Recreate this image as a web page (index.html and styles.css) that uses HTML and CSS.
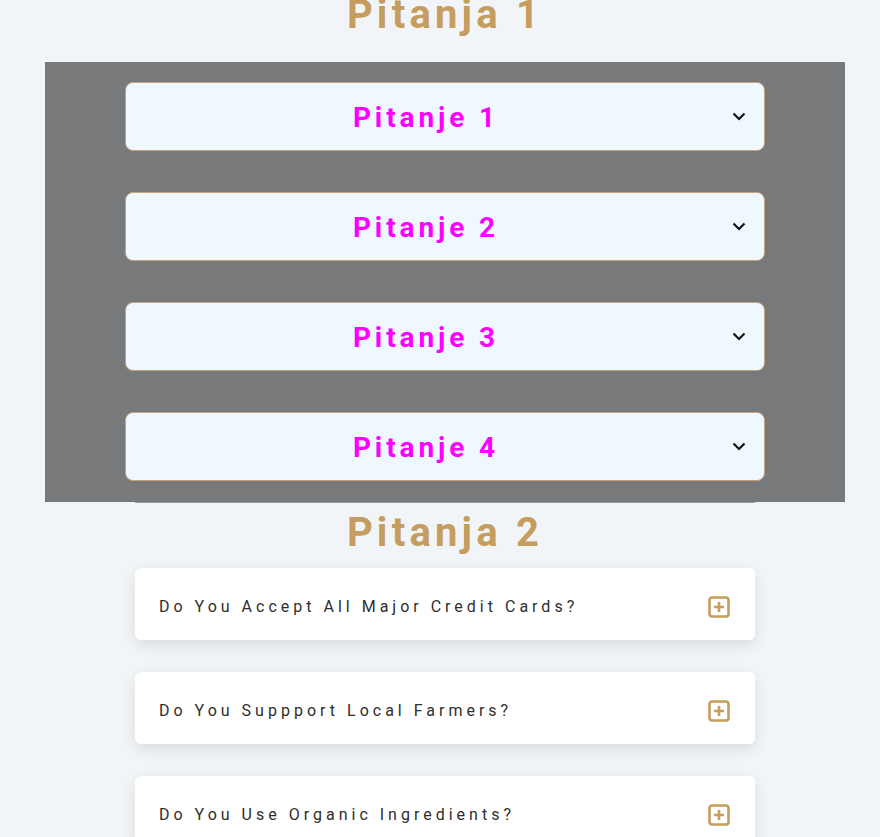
FILE: index.html
```html
<!DOCTYPE html>
<html lang="hr">
<head>
<meta charset="utf-8">
<title>Pitanja</title>
<link rel="stylesheet" href="styles.css">
</head>
<body>
<h1 class="title title-top">Pitanja 1</h1>
<section class="panel">
  <div class="select"><span class="select-label">Pitanje 1</span><svg class="chev" viewBox="0 0 14 9" width="14" height="9"><path d="M1.5 1.5 L7 7 L12.5 1.5" fill="none" stroke="#111" stroke-width="2.2"/></svg></div>
  <div class="select"><span class="select-label">Pitanje 2</span><svg class="chev" viewBox="0 0 14 9" width="14" height="9"><path d="M1.5 1.5 L7 7 L12.5 1.5" fill="none" stroke="#111" stroke-width="2.2"/></svg></div>
  <div class="select"><span class="select-label">Pitanje 3</span><svg class="chev" viewBox="0 0 14 9" width="14" height="9"><path d="M1.5 1.5 L7 7 L12.5 1.5" fill="none" stroke="#111" stroke-width="2.2"/></svg></div>
  <div class="select"><span class="select-label">Pitanje 4</span><svg class="chev" viewBox="0 0 14 9" width="14" height="9"><path d="M1.5 1.5 L7 7 L12.5 1.5" fill="none" stroke="#111" stroke-width="2.2"/></svg></div>
</section>
<section class="faq">
  <h2 class="title">Pitanja 2</h2>
  <article class="question"><h4 class="q-text">Do You Accept All Major Credit Cards?</h4><svg class="plus" viewBox="0 0 22 22" width="22" height="22"><rect x="1.5" y="1.5" width="19" height="19" rx="2.5" fill="none" stroke="#c59d5f" stroke-width="2.6"/><path d="M11 6v10M6 11h10" stroke="#c59d5f" stroke-width="2.6"/></svg></article>
  <article class="question"><h4 class="q-text">Do You Suppport Local Farmers?</h4><svg class="plus" viewBox="0 0 22 22" width="22" height="22"><rect x="1.5" y="1.5" width="19" height="19" rx="2.5" fill="none" stroke="#c59d5f" stroke-width="2.6"/><path d="M11 6v10M6 11h10" stroke="#c59d5f" stroke-width="2.6"/></svg></article>
  <article class="question"><h4 class="q-text">Do You Use Organic Ingredients?</h4><svg class="plus" viewBox="0 0 22 22" width="22" height="22"><rect x="1.5" y="1.5" width="19" height="19" rx="2.5" fill="none" stroke="#c59d5f" stroke-width="2.6"/><path d="M11 6v10M6 11h10" stroke="#c59d5f" stroke-width="2.6"/></svg></article>
</section>
</body>
</html>
```
FILE: styles.css
```css
* { box-sizing: border-box; }
html, body { margin: 0; padding: 0; }
body {
  background: #f1f5f8;
  font-family: Roboto, "Liberation Sans", sans-serif;
  color: #102a42;
  overflow: hidden;
  padding-left: 10px;
}
.title {
  margin: 0;
  text-align: center;
  color: #c59d5f;
  font-size: 40px;
  font-weight: 700;
  letter-spacing: 4.2px;
  line-height: 48px;
}
.title-top {
  margin-top: -9px;
  margin-bottom: 23px;
}
.panel {
  width: 800px;
  margin: 0 auto;
  background: #78797b;
  padding: 20px 80px 21px;
  display: flex;
  flex-direction: column;
  gap: 41px;
}
.select {
  height: 69px;
  background: #eff7ff;
  border: 1px solid #c5a27a;
  border-radius: 8px;
  display: flex;
  align-items: center;
  justify-content: center;
  padding-right: 38px;
  padding-top: 2px;
  position: relative;
}
.select-label {
  color: #ff00ff;
  font-size: 28px;
  font-weight: 700;
  letter-spacing: 3.9px;
}
.chev {
  position: absolute;
  right: 18px;
  top: 29px;
}
.faq {
  width: 620px;
  margin: 0 auto;
  border-top: 1px solid #9a9c9f;
  padding-top: 6px;
}
.faq .title { margin-bottom: 11px; }
.question {
  background: #fff;
  border-radius: 6px;
  box-shadow: 0 5px 15px rgba(0,0,0,0.1);
  height: 72px;
  margin-bottom: 32px;
  padding: 5px 25px 0 24px;
  display: flex;
  align-items: center;
  justify-content: space-between;
}
.q-text {
  margin: 0;
  font-size: 16px;
  font-weight: 400;
  letter-spacing: 4px;
  color: #2e2e2e;
}
.plus { display: block; }
```
